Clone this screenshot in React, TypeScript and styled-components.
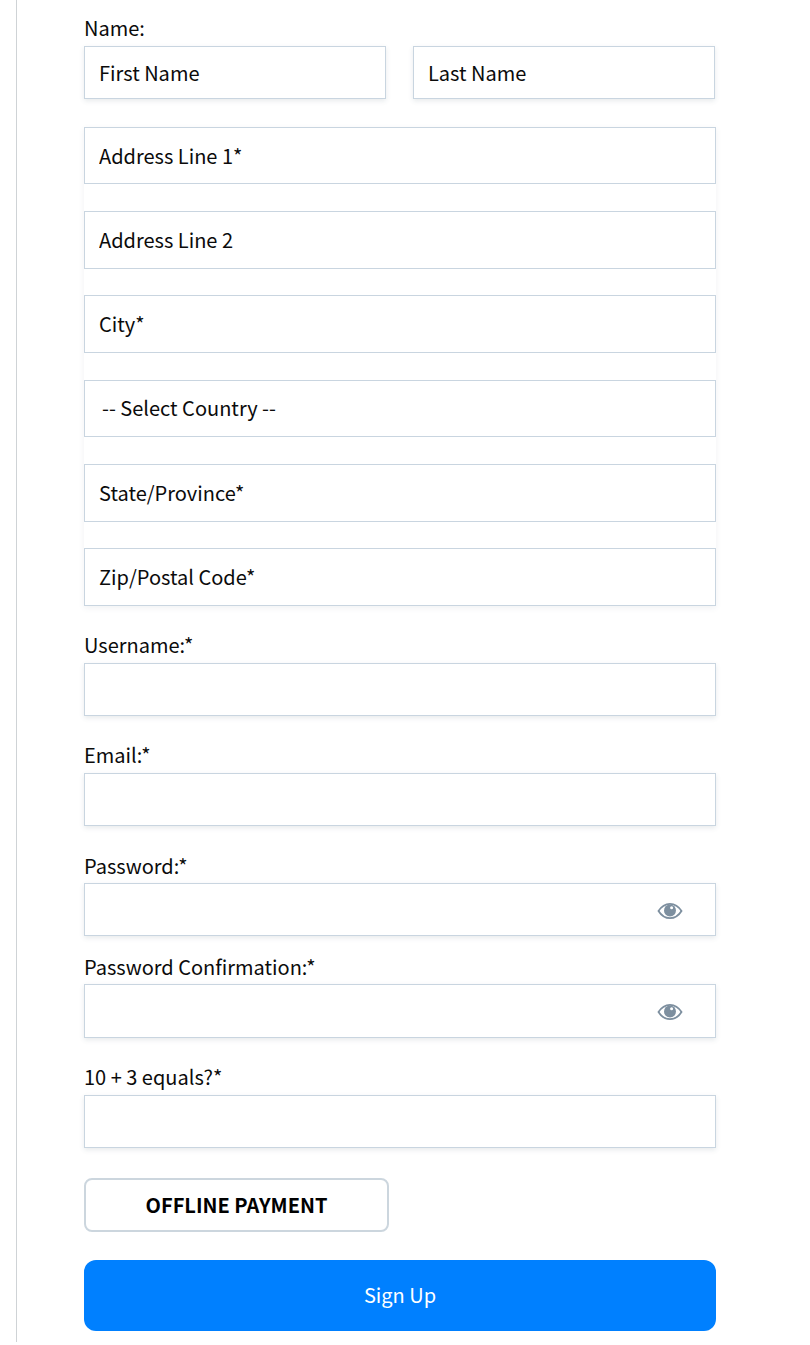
import styled, { createGlobalStyle } from "styled-components";

const GlobalStyle = createGlobalStyle`
  html, body {
    margin: 0;
    padding: 0;
    background: #fff;
  }
  * {
    box-sizing: border-box;
  }
`;

const fontStack = `"Noto Sans CJK SC", "Open Sans", sans-serif`;

const Page = styled.div`
  width: 810px;
  height: 1345px;
  padding: 0 0 3px 16px;
  font-family: ${fontStack};
  color: #0b0b0b;
`;

const Column = styled.form`
  height: 100%;
  border-left: 1px solid #cfd3d6;
  padding: 15px 0 0 67px;
  width: 700px;
  display: flex;
  flex-direction: column;
`;

const Label = styled.label<{ $top?: number; $bottom?: number }>`
  display: block;
  font-size: 20px;
  line-height: 26px;
  height: 26px;
  margin-top: ${(p) => p.$top ?? 0}px;
  margin-bottom: ${(p) => p.$bottom ?? 5}px;
`;

const NameRow = styled.div`
  display: grid;
  grid-template-columns: 302px 302px;
  column-gap: 27px;
`;

const Input = styled.input<{ $h?: number }>`
  display: block;
  width: 100%;
  height: ${(p) => p.$h ?? 53}px;
  border: 1px solid #c9d5e0;
  background: #fff;
  padding: 0 14px;
  font-family: ${fontStack};
  font-size: 20px;
  color: #0b0b0b;
  outline: none;
  box-shadow: 0 2px 5px rgba(60, 80, 100, 0.12);
  &::placeholder {
    color: #0b0b0b;
    opacity: 1;
  }
`;

const NameInput = styled(Input)`
  padding-bottom: 1px;
`;

const AddressStack = styled.div`
  margin: 28px 0 0;
  width: 632px;
  display: flex;
  flex-direction: column;
  background: #fff;
  box-shadow: 0 2px 6px rgba(60, 80, 100, 0.08);
`;

const AddressInput = styled(Input)<{ $top?: number }>`
  box-shadow: none;
  margin-top: ${(p) => p.$top ?? 0}px;
  padding-bottom: 1px;
`;

const CountrySelect = styled.select`
  display: block;
  width: 100%;
  height: 57px;
  margin: 27px 0;
  border: 1px solid #c9d5e0;
  background: #fff;
  padding: 0 17px 2px;
  font-family: ${fontStack};
  font-size: 20px;
  color: #0b0b0b;
  appearance: none;
  border-radius: 0;
  outline: none;
`;

const Field = styled.div`
  width: 632px;
  position: relative;
`;

const EyeButton = styled.button`
  position: absolute;
  right: 33px;
  top: 50%;
  transform: translateY(-50%);
  margin-top: 1px;
  width: 26px;
  height: 18px;
  padding: 0;
  border: none;
  background: none;
  display: flex;
`;

const OfflineButton = styled.button`
  width: 305px;
  height: 54px;
  margin-top: 30px;
  padding: 0 0 1px;
  border: 2px solid #ccd6de;
  border-radius: 8px;
  background: #fff;
  font-family: ${fontStack};
  font-weight: 700;
  font-size: 20px;
  color: #000;
`;

const SubmitButton = styled.button`
  width: 632px;
  height: 71px;
  margin-top: 28px;
  padding: 0 0 2px;
  border: none;
  border-radius: 12px;
  background: #0080ff;
  font-family: ${fontStack};
  font-size: 20px;
  color: #fff;
`;

function EyeIcon() {
  return (
    <svg width="26" height="18" viewBox="0 0 26 18" fill="none">
      <path
        d="M1.5 9C4.5 4.2 8.5 1.8 13 1.8S21.5 4.2 24.5 9C21.5 13.8 17.5 16.2 13 16.2S4.5 13.8 1.5 9Z"
        stroke="#7d8f9f"
        strokeWidth="1.8"
      />
      <circle cx="13" cy="8.4" r="6" fill="#7d8f9f" />
      <circle cx="14.6" cy="5.8" r="1.5" fill="#fff" />
    </svg>
  );
}

function PasswordField({ height }: { height?: number }) {
  return (
    <Field>
      <Input type="password" $h={height} />
      <EyeButton type="button" aria-label="Show password">
        <EyeIcon />
      </EyeButton>
    </Field>
  );
}

export default function App() {
  return (
    <Page>
      <GlobalStyle />
      <Column>
        <Label>Name:</Label>
        <NameRow>
          <NameInput placeholder="First Name" />
          <NameInput placeholder="Last Name" />
        </NameRow>
        <AddressStack>
          <AddressInput $h={57} placeholder="Address Line 1*" />
          <AddressInput $h={58} $top={27} placeholder="Address Line 2" />
          <AddressInput $h={58} $top={26} placeholder="City*" />
          <CountrySelect defaultValue="">
            <option value="">-- Select Country --</option>
          </CountrySelect>
          <AddressInput $h={58} placeholder="State/Province*" />
          <AddressInput $h={58} $top={26} placeholder="Zip/Postal Code*" />
        </AddressStack>
        <Label $top={26}>Username:*</Label>
        <Field>
          <Input />
        </Field>
        <Label $top={26}>Email:*</Label>
        <Field>
          <Input />
        </Field>
        <Label $top={27} $bottom={4}>Password:*</Label>
        <PasswordField />
        <Label $top={18} $bottom={4}>Password Confirmation:*</Label>
        <PasswordField height={54} />
        <Label $top={26}>10 + 3 equals?*</Label>
        <Field>
          <Input />
        </Field>
        <OfflineButton type="button">OFFLINE PAYMENT</OfflineButton>
        <SubmitButton type="submit">Sign Up</SubmitButton>
      </Column>
    </Page>
  );
}
